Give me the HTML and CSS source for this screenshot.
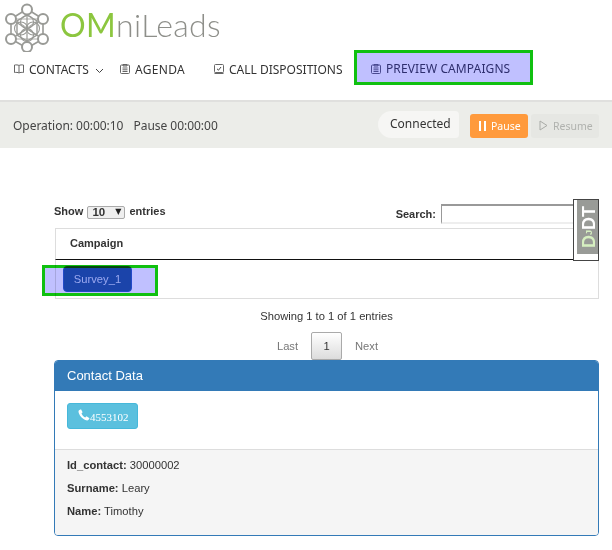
FILE: index.html
```html
<!DOCTYPE html>
<html lang="en">
<head>
<meta charset="utf-8">
<title>OMniLeads</title>
<link rel="stylesheet" href="styles.css">
</head>
<body>
<header class="top">
  <div class="brand">
    <svg class="brand-mark" width="46" height="50" viewBox="0 0 46 50" fill="none" stroke="#999a96">
      <path d="M23 7 L39 17 V37 L23 46 L7 37 V17 Z" stroke-width="1.600"/>
      <path d="M23 7 V46 M7 17 L39 37 M39 17 L7 37" stroke-width="1.200"/>
      <path d="M23 13 L33 19 V33 L23 39 L13 33 V19 Z" stroke-width="1.400"/>
      <path d="M13 19 L33 33 M33 19 L13 33 M7 17 H39 M7 37 H39" stroke-width=".8"/>
      <circle cx="23" cy="20" r="6.500" stroke-width="1.100"/>
      <circle cx="23" cy="33" r="6.500" stroke-width="1.100"/>
      <circle cx="17" cy="26.500" r="6.500" stroke-width="1.100"/>
      <circle cx="29" cy="26.500" r="6.500" stroke-width="1.100"/>
      <g fill="#fff" stroke-width="2">
        <circle cx="23" cy="7.500" r="5"/>
        <circle cx="7" cy="17" r="5"/>
        <circle cx="39" cy="17" r="5"/>
        <circle cx="7" cy="37" r="5"/>
        <circle cx="39" cy="37" r="5"/>
        <circle cx="23" cy="45" r="5"/>
      </g>
    </svg>
    <span class="brand-name"><span class="brand-om">OM</span>niLeads</span>
  </div>
  <nav class="nav">
    <a class="nav-item nav-contacts">
      <svg class="nav-icon" width="10" height="10" viewBox="0 0 10 10" fill="none" stroke="#666" stroke-width="1"><path d="M5 1.500 C4 .8 2 .8 .5 1 V8.500 C2 8.300 4 8.300 5 9 C6 8.300 8 8.300 9.500 8.500 V1 C8 .8 6 .8 5 1.500 Z M5 1.500 V9"/></svg>
      CONTACTS
      <svg class="nav-caret" width="9" height="6" viewBox="0 0 9 6" fill="none" stroke="#444" stroke-width="1"><path d="M1 1 L4.500 4.500 L8 1"/></svg>
    </a>
    <a class="nav-item nav-agenda">
      <svg class="nav-icon" width="10" height="10" viewBox="0 0 10 10" fill="none" stroke="#666" stroke-width="1"><rect x=".5" y="1" width="9" height="8.500" rx="1"/><path d="M3 .5 H7 V2 H3 Z M2.500 4 H7.500 M2.500 5.800 H7.500 M2.500 7.500 H7.500"/></svg>
      AGENDA
    </a>
    <a class="nav-item nav-calls">
      <svg class="nav-icon" width="10" height="10" viewBox="0 0 10 10" fill="none" stroke="#666" stroke-width="1"><rect x=".5" y=".5" width="9" height="8" rx="1"/><path d="M.5 9.300 H9.500" stroke-width="1.400"/><path d="M3 4.800 L4.500 6.200 L7 3" stroke="#444"/></svg>
      CALL DISPOSITIONS
    </a>
    <a class="nav-item nav-preview">
      <svg class="nav-icon" width="10" height="10" viewBox="0 0 10 10" fill="none" stroke="#4a4a90" stroke-width="1"><rect x=".5" y="1" width="9" height="8.500" rx="1"/><path d="M3 .5 H7 V2 H3 Z M2.500 4 H7.500 M2.500 5.800 H7.500 M2.500 7.500 H7.500"/></svg>
      PREVIEW CAMPAIGNS
    </a>
  </nav>
</header>

<section class="status">
  <div class="timers">
    <span>Operation: 00:00:10</span>
    <span>Pause 00:00:00</span>
  </div>
  <div class="connected">Connected</div>
  <button class="btn-pause"><span class="pause-bars"></span>Pause</button>
  <button class="btn-resume">
    <svg width="9" height="11" viewBox="0 0 9 11" fill="none" stroke="#a9aba7" stroke-width="1"><path d="M1 1 L8 5.500 L1 10 Z"/></svg>
    Resume
  </button>
</section>

<main class="content">
  <div class="table-tools">
    <label class="length">Show
      <span class="select-wrap"><select class="length-select"><option>10</option></select></span>
      entries</label>
    <label class="search">Search:<input class="search-input" type="text"></label>
  </div>
  <div class="table-wrap">
    <div class="th">Campaign</div>
    <div class="td"><a class="survey">Survey_1</a></div>
    <div class="highlight-row"></div>
    <div class="ddt"><span class="ddt-text"><span class="ddt-d">D<small>J</small></span>DT</span></div>
  </div>
  <p class="info">Showing 1 to 1 of 1 entries</p>
  <div class="pager">
    <a class="page-link page-last">Last</a>
    <a class="page-current">1</a>
    <a class="page-link">Next</a>
  </div>
  <section class="panel">
    <h3 class="panel-heading">Contact Data</h3>
    <div class="panel-body">
      <a class="phone">
        <svg width="12" height="12" viewBox="0 0 12 12" fill="#fff"><path d="M1 1.200 L3 .3 L4.600 3.200 L3.500 4.400 C4 5.800 5.400 7.500 7.200 8.400 L8.500 7.300 L11.500 9.200 L10.400 11 C9.500 11.800 7.500 11.500 5.200 9.800 C2.500 7.800 .8 5 .5 3 C.4 2.200 .6 1.600 1 1.200 Z"/></svg>4553102
      </a>
    </div>
    <div class="panel-footer">
      <p class="field"><b>Id_contact:</b> 30000002</p>
      <p class="field"><b>Surname:</b> Leary</p>
      <p class="field"><b>Name:</b> Timothy</p>
    </div>
  </section>
</main>
</body>
</html>
```

FILE: styles.css
```css
* { box-sizing: border-box; }
html, body { margin: 0; padding: 0; }
body {
  width: 612px;
  height: 550px;
  overflow: hidden;
  background: #fff;
  color: #333;
  font-family: "Liberation Sans", Arial, sans-serif;
  font-size: 11.200px;
}

.top { height: 100px; }
.brand { display: flex; align-items: center; height: 50px; padding: 0 0 0 4px; }
.brand-mark { flex: none; margin-top: 3px; }
.brand-name {
  margin-left: 10px;
  font-family: Lato, sans-serif;
  font-weight: 300;
  font-size: 32px;
  line-height: 50px;
  color: #8e8f8a;
  letter-spacing: .35px;
}
.brand-om { color: #8cc63f; font-weight: 400; }

.nav { display: flex; align-items: center; height: 35px; }
.nav-item {
  display: flex;
  align-items: center;
  gap: 5px;
  padding-top: 3px;
  font-family: "Noto Sans", sans-serif;
  font-size: 12px;
  color: #333;
  white-space: nowrap;
}
.nav-contacts { margin-left: 14px; width: 106px; }
.nav-caret { margin-left: 1px; margin-top: 4px; }
.nav-agenda { width: 94px; letter-spacing: .3px; }
.nav-calls { width: 140px; }
.nav-preview {
  width: 179px;
  height: 35px;
  padding-left: 14px;
  padding-top: 2px;
  background: #c0c0ff;
  border: 3px solid #10c010;
  color: #2e2e6e;
  letter-spacing: .1px;
}

.status {
  display: flex;
  align-items: center;
  height: 48px;
  padding: 0 13px;
  background: #ecede9;
  border-top: 2px solid #e0e0de;
  font-family: "Noto Sans", sans-serif;
  font-size: 12px;
  color: #444;
}
.timers { display: flex; gap: 10px; width: 365px; letter-spacing: -.03px; }
.connected {
  width: 81px;
  height: 27px;
  margin-top: -1px;
  padding-left: 12px;
  line-height: 25px;
  background: #f6f6f4;
  border-radius: 14px 4px 4px 14px;
  color: #333;
}
.btn-pause, .btn-resume {
  display: flex;
  align-items: center;
  height: 24px;
  margin-top: 1px;
  border: 0;
  border-radius: 3px;
  font-family: "Noto Sans", sans-serif;
  font-size: 10.500px;
  padding: 0;
}
.btn-pause {
  width: 58px;
  margin-left: 11px;
  padding-left: 9px;
  background: #ff9a3c;
  color: #fff;
}
.pause-bars {
  width: 7px;
  height: 10px;
  margin-right: 5px;
  border-left: 2px solid #fff;
  border-right: 2px solid #fff;
}
.btn-resume {
  width: 68px;
  margin-left: 3px;
  padding-left: 8px;
  gap: 5px;
  background: #e6e7e3;
  color: #b0b2ae;
}

.content { padding: 0 13px 0 54px; }
.table-tools {
  display: flex;
  justify-content: space-between;
  height: 80px;
  padding-top: 56px;
  font-weight: bold;
  color: #333;
}
.length { height: 14px; line-height: 14px; font-size: 11px; }
.select-wrap { position: relative; display: inline-block; width: 38px; height: 13px; margin: 0 1px; vertical-align: -1px; }
.select-wrap::after {
  content: "▼";
  position: absolute;
  right: 4px;
  top: 0;
  font: 8px/12px "DejaVu Sans", sans-serif;
  color: #222;
}
.length-select {
  appearance: none;
  display: block;
  width: 38px;
  height: 13px;
  margin: 0;
  padding: 0 0 0 4px;
  font: bold 11.500px/11px "Liberation Sans", sans-serif;
  border: 1px solid #aaa;
  border-radius: 2px;
  background: #efefef;
  color: #333;
}
.search { display: flex; gap: 5px; height: 20px; margin-top: 2px; line-height: 16px; font-size: 11px; }
.search-input {
  width: 158px;
  height: 20px;
  margin: -2px 0 0;
  border: 0;
  border-top: 2px solid #999;
  border-left: 1px solid #999;
  border-bottom: 2px solid #eee;
  background: #fff;
  padding: 0;
}

.table-wrap { position: relative; width: 545px; }
.th {
  height: 32px;
  margin-left: 1px;
  padding-left: 14px;
  border: 1px solid #ddd;
  border-bottom: 1px solid #111;
  font-weight: bold;
  line-height: 28px;
  font-size: 11px;
  color: #333;
}
.td {
  height: 39px;
  margin-left: 1px;
  padding: 6px 0 0 7px;
  border: 1px solid #ddd;
  border-top: 0;
}
.survey {
  display: block;
  width: 69px;
  height: 26px;
  background: #245aaa;
  border: 1px solid #2f62c8;
  border-radius: 4px;
  color: #cddff0;
  text-align: center;
  line-height: 24px;
}
.highlight-row {
  position: absolute;
  left: -12px;
  top: 37px;
  width: 116px;
  height: 31px;
  border: 3px solid #10c010;
  background: rgba(130, 130, 255, .5);
  mix-blend-mode: multiply;
}
.ddt {
  position: absolute;
  right: 0;
  top: -29px;
  width: 26px;
  height: 62px;
  border: 1px solid #444;
  padding: 0 0 6px 3px;
  background: #fff;
}
.ddt-text {
  display: flex;
  align-items: center;
  justify-content: center;
  height: 100%;
  padding-right: 3px;
  background: #999b97;
  color: #fff;
  font: bold 18px/1 "Liberation Sans", sans-serif;
  writing-mode: vertical-rl;
  transform: rotate(180deg);
}
.ddt-d { color: #d6efc0; }
.ddt-d small { font-size: 9px; }

.info { margin: 11px 0 0; text-align: center; height: 13px; line-height: 13px; color: #333; }
.pager {
  display: flex;
  justify-content: center;
  align-items: stretch;
  height: 28px;
  margin-top: 9px;
  color: #777;
}
.page-link { width: 49px; line-height: 28px; text-align: center; color: #777; }
.page-last { padding-left: 2px; }
.page-current {
  width: 31px;
  border: 1px solid #aaa;
  border-radius: 2px;
  background: linear-gradient(#fff, #dcdcdc);
  line-height: 26px;
  text-align: center;
  color: #333;
}

.panel {
  width: 545px;
  height: 176px;
  border: 1px solid #337ab7;
  border-radius: 4px;
  overflow: hidden;
}
.panel-heading {
  margin: 0;
  height: 30px;
  padding-left: 12px;
  background: #337ab7;
  color: #fff;
  font-weight: 400;
  font-size: 13px;
  line-height: 29px;
}
.panel-body { height: 58px; padding: 12px 0 0 12px; }
.phone {
  display: flex;
  align-items: center;
  width: 71px;
  height: 26px;
  padding: 2px 0 0 10px;
  background: #5bc0de;
  border: 1px solid #46b8da;
  border-radius: 3px;
  color: #fff;
  font: 11px "Liberation Serif", serif;
}
.phone svg { margin-top: -5px; }
.panel-footer {
  height: 86px;
  padding: 9px 12px 0;
  background: #f5f5f5;
  border-top: 1px solid #ddd;
}
.field { margin: 0 0 10px; height: 13px; line-height: 13px; }
```
